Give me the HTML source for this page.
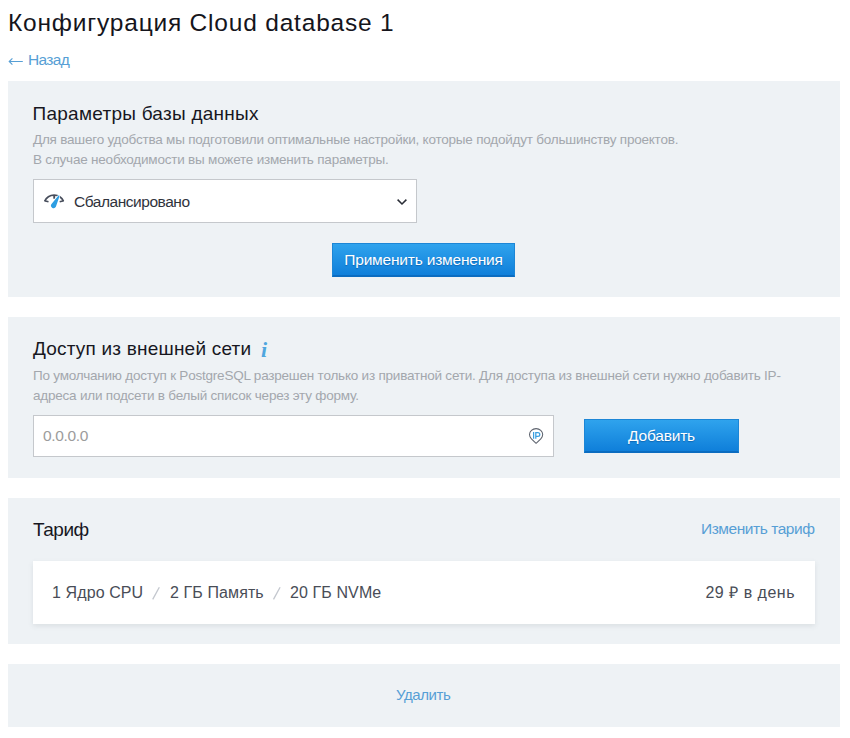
<!DOCTYPE html>
<html lang="ru">
<head>
<meta charset="utf-8">
<title>Конфигурация Cloud database 1</title>
<style>
*{box-sizing:border-box;margin:0;padding:0}
html,body{width:850px;height:738px;background:#fff;overflow:hidden}
body{font-family:"Liberation Sans",sans-serif;color:#1b1b22;position:relative}
.abs{position:absolute;white-space:nowrap}
.panel{position:absolute;left:8px;width:832px;background:#eef2f5}
h1{position:absolute;left:8px;top:9px;font-size:24.5px;font-weight:400;line-height:28px;color:#15151c;white-space:nowrap;letter-spacing:0.8px}
.back{left:28px;top:50px;font-size:15.5px;line-height:20px;color:#579fd5;letter-spacing:-0.66px}
.h2{font-size:19px;line-height:24px;color:#17171f;letter-spacing:0.2px}
.desc{font-size:13.5px;line-height:19.5px;color:#a3a7ad;letter-spacing:-0.21px}
.select{position:absolute;left:33px;top:179px;width:384px;height:44px;background:#fff;border:1px solid #c5c8cc}
.select .t{position:absolute;left:40px;top:12px;font-size:15.5px;line-height:20px;color:#30333c;letter-spacing:-0.46px}
.btn{position:absolute;height:34px;color:#fff;font-size:15.5px;letter-spacing:-0.2px;line-height:32px;text-align:center;background:linear-gradient(#2fa3ed,#0f7fda);border:1px solid #1c86d6;border-bottom:2px solid #0b6cc0;text-shadow:0 1px 1px rgba(0,70,140,.5)}
.input{position:absolute;left:33px;top:415px;width:521px;height:42px;background:#fff;border:1px solid #c5c8cc}
.input .t{position:absolute;left:9px;top:10px;font-size:15.5px;line-height:20px;color:#9c9c9c;letter-spacing:-0.34px}
.link{color:#579fd5;font-size:15.5px;line-height:20px;letter-spacing:-0.55px}
.card{position:absolute;left:33px;top:561px;width:782px;height:63px;background:#fff;box-shadow:0 2px 5px rgba(90,100,110,.13)}
.card .t{position:absolute;top:22px;font-size:16px;line-height:20px;color:#494d57}
.card .s2{color:#bfc3ca;font-size:17px}
</style>
</head>
<body>
<h1>Конфигурация Cloud database 1</h1>
<svg class="abs" style="left:8px;top:56px" width="16" height="10" viewBox="0 0 16 10"><path d="M14.8 5.5 H1.2 M4.4 2.3 L1.2 5.5 L4.4 8.7" fill="none" stroke="#579fd5" stroke-width="1.1"/></svg>
<div class="abs back">Назад</div>

<div class="panel" style="top:81px;height:216px"></div>
<div class="abs h2" style="left:32.5px;top:102px;letter-spacing:0.26px">Параметры базы данных</div>
<div class="abs desc" style="left:33px;top:130px">Для вашего удобства мы подготовили оптимальные настройки, которые подойдут большинству проектов.<br>В случае необходимости вы можете изменить параметры.</div>
<div class="select">
  <svg style="position:absolute;left:9px;top:13px" width="24" height="18" viewBox="0 0 24 18">
    <path d="M1.7 8.2 A10.3 10.3 0 0 1 20.5 8.2" fill="none" stroke="#474d5b" stroke-width="1.6"/>
    <path d="M1.5 7.7 L5.5 8.8 M20.7 7.7 L16.7 8.8" stroke="#474d5b" stroke-width="1.6" fill="none"/>
    <path d="M11.2 2.2 L11.2 5.7" stroke="#474d5b" stroke-width="1.9" fill="none"/>
    <path d="M15.29 2.66 A0.7 0.7 0 0 1 16.51 3.34 L12.88 13.86 A2.6 2.6 0 0 1 8.32 11.34 Z" fill="#2d9ee2" stroke="#fff" stroke-width="1.3" paint-order="stroke"/>
  </svg>
  <div class="t abs">Сбалансировано</div>
  <svg style="position:absolute;left:362px;top:17.5px" width="12" height="8" viewBox="0 0 12 8"><path d="M1.6 1.6 L6 6 L10.4 1.6" fill="none" stroke="#2a2d36" stroke-width="1.5"/></svg>
</div>
<div class="btn" style="left:332px;top:243px;width:183px">Применить изменения</div>

<div class="panel" style="top:317px;height:161px"></div>
<div class="abs h2" style="left:33px;top:337px">Доступ из внешней сети</div>
<div class="abs" style="left:261px;top:338px;font-family:'Liberation Serif',serif;font-style:italic;font-weight:700;font-size:22px;line-height:24px;color:#4fa6de">i</div>
<div class="abs desc" style="left:33px;top:366px">По умолчанию доступ к PostgreSQL разрешен только из приватной сети. Для доступа из внешней сети нужно добавить IP-<br>адреса или подсети в белый список через эту форму.</div>
<div class="input">
  <div class="t abs">0.0.0.0</div>
  <svg style="position:absolute;left:494px;top:11px" width="16" height="18" viewBox="0 0 16 18">
    <path d="M8.1 16.3 L3.4 11.8 C2.1 10.5 1.5 9 1.5 7.6 C1.5 4.1 4.5 1.6 8.1 1.6 C11.7 1.6 14.7 4.1 14.7 7.6 C14.7 9 14.1 10.5 12.8 11.8 Z" fill="#fff" stroke="#5d636e" stroke-width="1.05" stroke-linejoin="round"/>
    <path d="M5.6 5 V11.8 M7.8 11.8 V5.6 H9.9 A1.9 1.9 0 0 1 9.9 9.4 H7.8" fill="none" stroke="#3a9fe0" stroke-width="1.25"/>
  </svg>
</div>
<div class="btn" style="left:584px;top:419px;width:155px">Добавить</div>

<div class="panel" style="top:498px;height:146px"></div>
<div class="abs h2" style="left:33px;top:518px;letter-spacing:-0.5px">Тариф</div>
<div class="abs link" style="right:35.5px;top:519px;letter-spacing:-0.45px">Изменить тариф</div>
<div class="card">
  <div class="t abs" style="left:19px;letter-spacing:0.1px">1 Ядро CPU</div>
  <svg class="abs" style="left:118px;top:24px" width="10" height="16" viewBox="0 0 10 16"><path d="M1.7 14.4 L8.3 2.2" stroke="#c3c7ce" stroke-width="1.3" fill="none"/></svg>
  <div class="t abs" style="left:137px;letter-spacing:0.1px">2 ГБ Память</div>
  <svg class="abs" style="left:239px;top:24px" width="10" height="16" viewBox="0 0 10 16"><path d="M1.5 14.4 L8.1 2.2" stroke="#c3c7ce" stroke-width="1.3" fill="none"/></svg>
  <div class="t abs" style="left:257px;letter-spacing:0.1px">20 ГБ NVMe</div>
  <div class="t abs" style="right:20px;letter-spacing:0.5px">29 ₽ в день</div>
</div>

<div class="panel" style="top:664px;height:63px"></div>
<div class="abs link" style="left:396px;top:685px;font-size:15px;letter-spacing:-0.42px">Удалить</div>
</body>
</html>
